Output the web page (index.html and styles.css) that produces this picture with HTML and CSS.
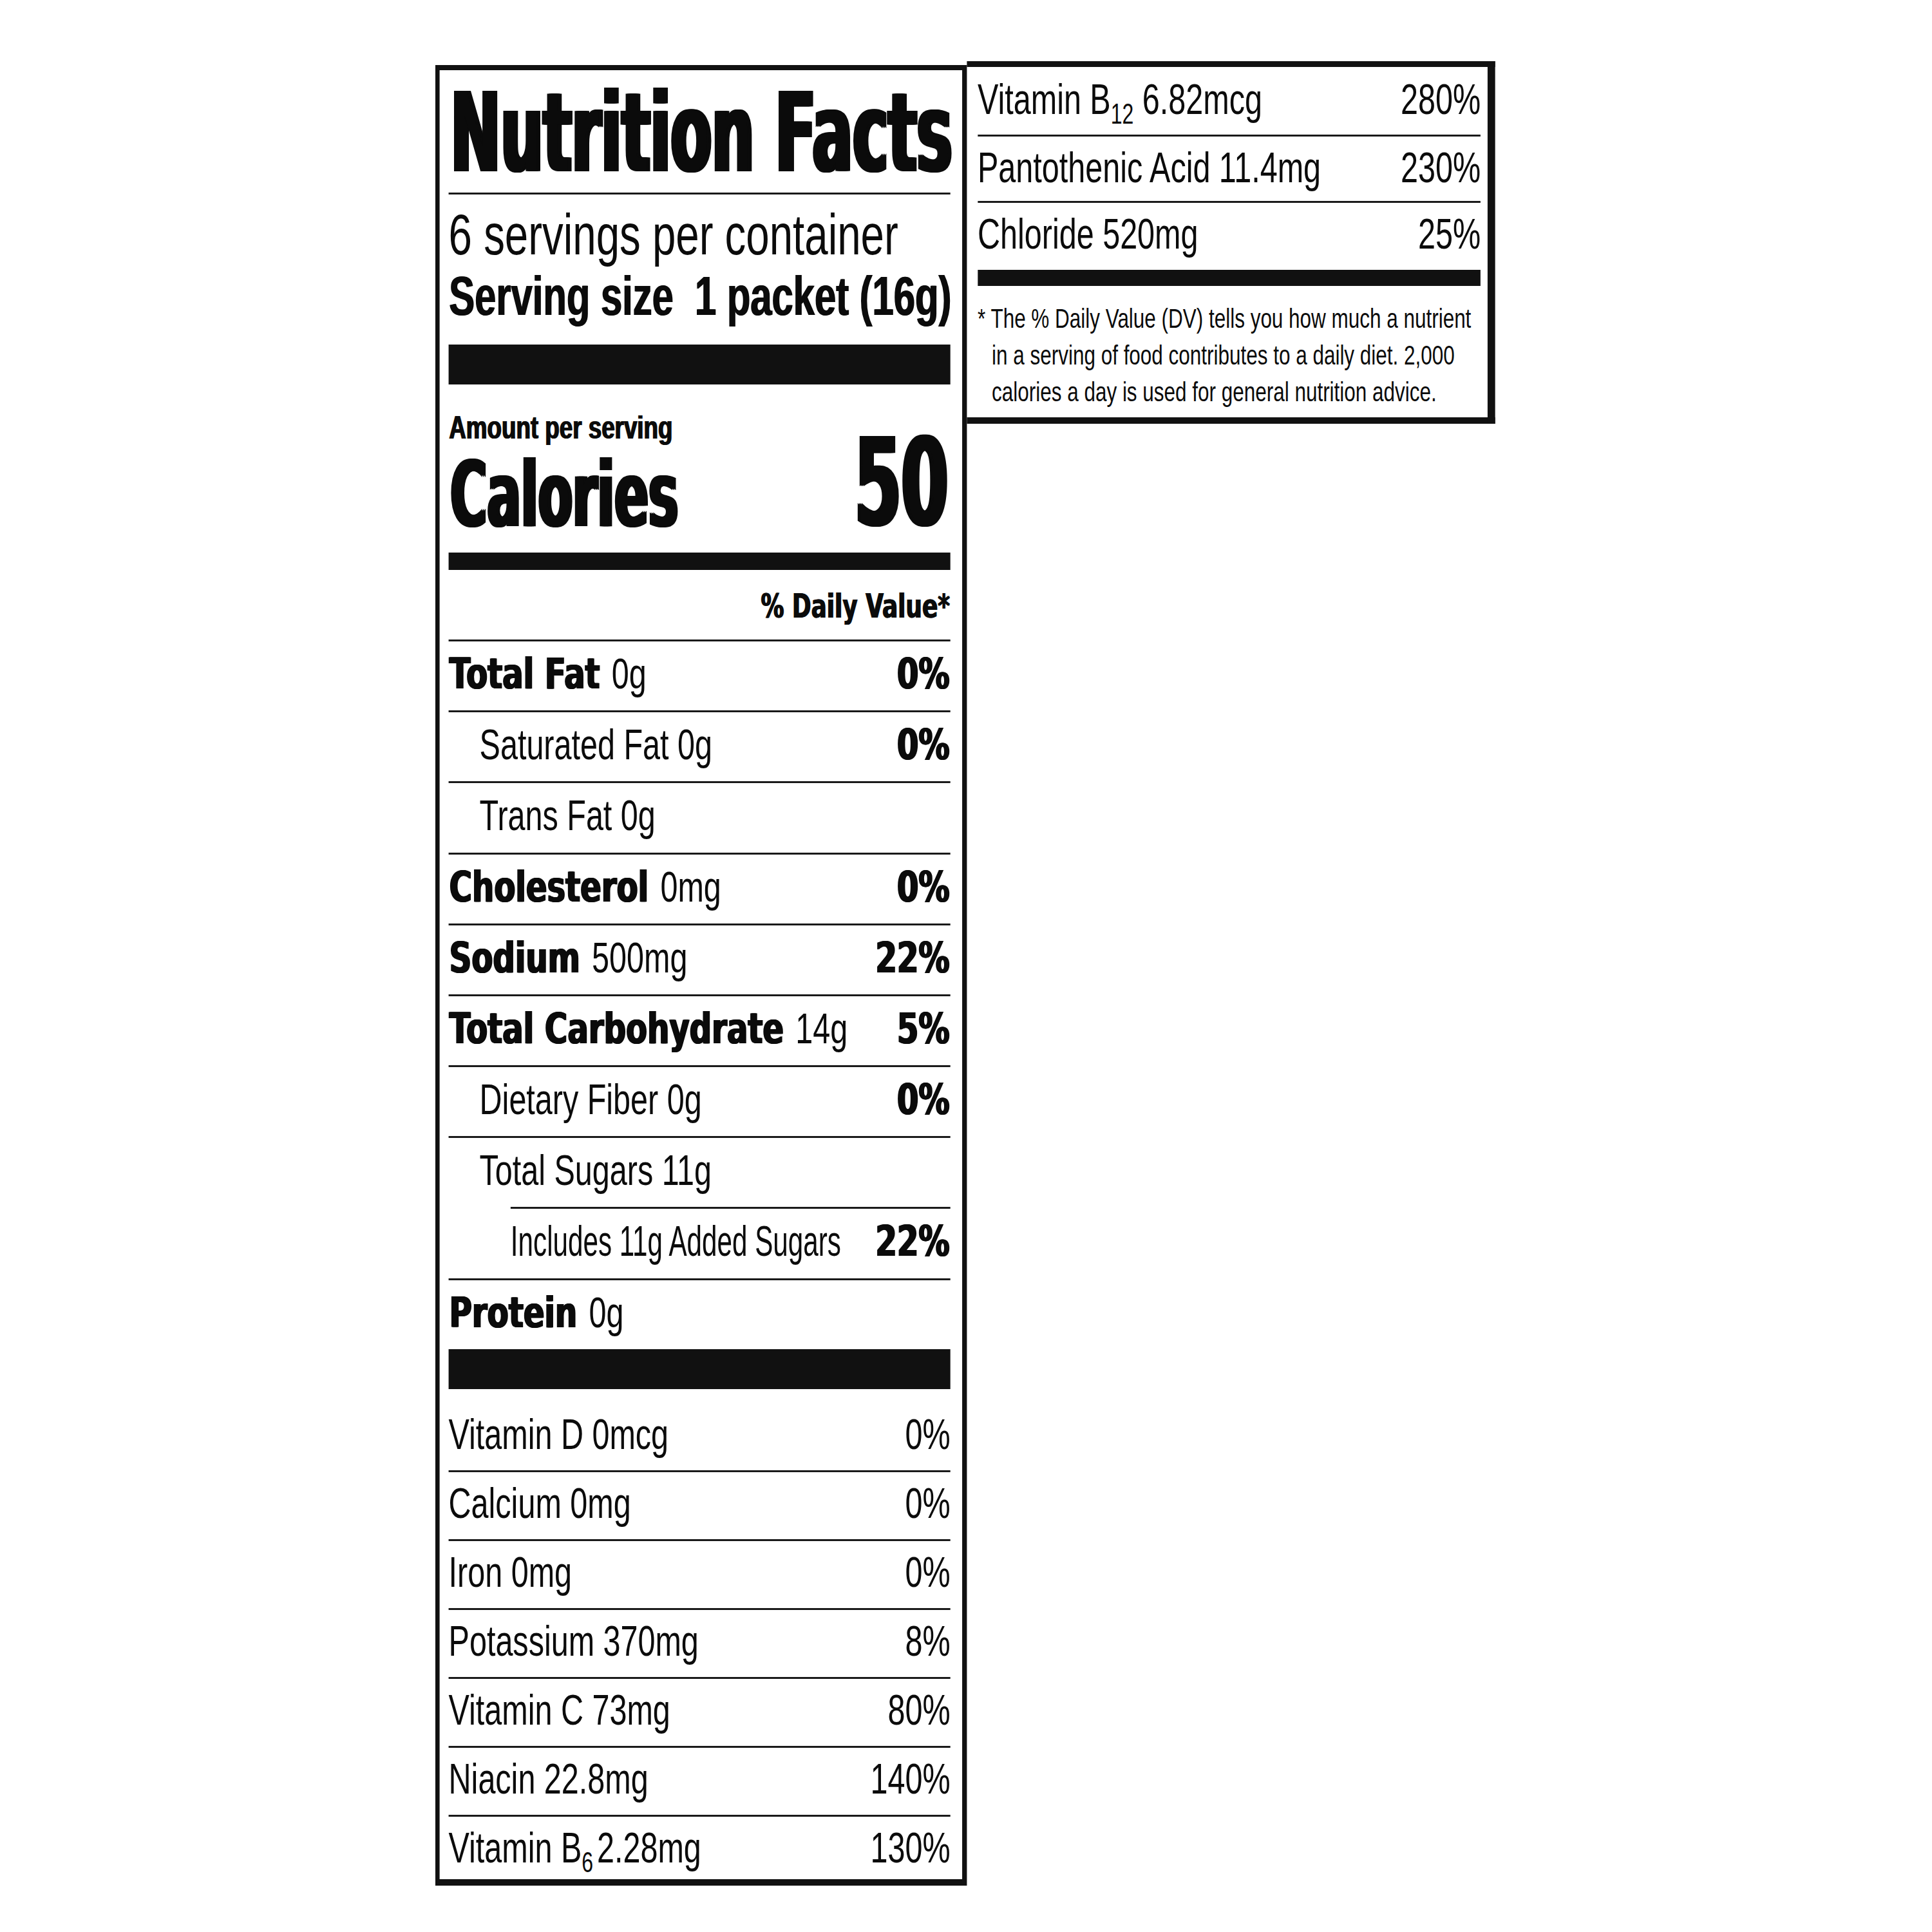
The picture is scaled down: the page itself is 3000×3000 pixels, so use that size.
FILE: index.html
```html
<!DOCTYPE html>
<html lang="en">
<head>
<meta charset="utf-8">
<title>Nutrition Facts</title>
<link rel="stylesheet" href="styles.css">
</head>
<body>
<div class="sheet">
  <section class="panel main">
    <h1 class="title">Nutrition Facts</h1>
    <div class="servings">
      <div class="per">6 servings per container</div>
      <div class="size">Serving size&nbsp; 1 packet (16g)</div>
    </div>
    <div class="bar bar-thick"></div>
    <div class="cal">
      <div class="cal-left">
        <div class="amount">Amount per serving</div>
        <div class="cal-label">Calories</div>
      </div>
      <div class="cal-value">50</div>
    </div>
    <div class="bar bar-mid"></div>
    <div class="dv-head"><span class="dv-text">% Daily Value*</span></div>
    <div class="nutrients">
      <div class="row"><span class="lbl"><b>Total Fat</b> 0g</span><b class="pct">0%</b></div>
      <div class="row sub"><span class="lbl">Saturated Fat 0g</span><b class="pct">0%</b></div>
      <div class="row sub"><span class="lbl">Trans Fat 0g</span></div>
      <div class="row"><span class="lbl"><b>Cholesterol</b> 0mg</span><b class="pct">0%</b></div>
      <div class="row"><span class="lbl"><b>Sodium</b> 500mg</span><b class="pct">22%</b></div>
      <div class="row"><span class="lbl"><b>Total Carbohydrate</b> 14g</span><b class="pct">5%</b></div>
      <div class="row sub"><span class="lbl">Dietary Fiber 0g</span><b class="pct">0%</b></div>
      <div class="row sub"><span class="lbl">Total Sugars 11g</span></div>
      <div class="row added"><span class="lbl">Includes 11g Added Sugars</span><b class="pct">22%</b></div>
      <div class="row"><span class="lbl"><b>Protein</b> 0g</span></div>
    </div>
    <div class="bar bar-thick"></div>
    <div class="vitamins">
      <div class="vrow"><span class="lbl">Vitamin D 0mcg</span><span class="val">0%</span></div>
      <div class="vrow"><span class="lbl">Calcium 0mg</span><span class="val">0%</span></div>
      <div class="vrow"><span class="lbl">Iron 0mg</span><span class="val">0%</span></div>
      <div class="vrow"><span class="lbl">Potassium 370mg</span><span class="val">8%</span></div>
      <div class="vrow"><span class="lbl">Vitamin C 73mg</span><span class="val">80%</span></div>
      <div class="vrow"><span class="lbl">Niacin 22.8mg</span><span class="val">140%</span></div>
      <div class="vrow"><span class="lbl">Vitamin B<span class="subs tight">6</span>2.28mg</span><span class="val">130%</span></div>
    </div>
  </section>
  <section class="panel side">
    <div class="srow"><span class="lbl">Vitamin B<span class="subs">12</span> 6.82mcg</span><span class="val">280%</span></div>
    <div class="srow"><span class="lbl">Pantothenic Acid 11.4mg</span><span class="val">230%</span></div>
    <div class="srow"><span class="lbl">Chloride 520mg</span><span class="val">25%</span></div>
    <div class="bar bar-side"></div>
    <p class="note">* The % Daily Value (DV) tells you how much a nutrient<br>in a serving of food contributes to a daily diet. 2,000<br>calories a day is used for general nutrition advice.</p>
  </section>
</div>
</body>
</html>
```
FILE: styles.css
```css
html, body {
  margin: 0;
  padding: 0;
  background: #fff;
}
body {
  box-sizing: border-box;
  width: 3000px;
  height: 3000px;
  overflow: hidden;
  padding-top: 95px;
  color: #0b0b0b;
  font-family: "Liberation Sans", Arial, Helvetica, sans-serif;
}

/* whole label is set in Helvetica-condensed proportions */
.sheet {
  display: flex;
  align-items: flex-start;
  width: max-content;
  margin-left: 676px;
  transform: scaleX(0.735);
  transform-origin: 0 0;
}

.panel {
  border: 0 solid #111;
}
.main {
  margin-top: 6px;
  border-width: 8px 10px 10px 9.5px;
  padding: 0 24.5px 0 19px;
  width: 1060px;
}
.side {
  border-width: 9px 16.3px 10px 0;
  padding: 0 15px 0 23.1px;
  width: 1062.6px;
}

.title {
  margin: 0;
  padding-top: 6px;
  height: 184px;
  line-height: 184px;
  font-family: "DejaVu Sans", sans-serif;
  font-weight: bold;
  font-size: 171.5px;
  white-space: nowrap;
  transform: scaleX(0.736);
  transform-origin: left center;
  text-shadow: 4px 0 0, 8px 0 0, 12px 0 0;
}

.servings {
  border-top: 3px solid #1a1a1a;
  padding: 14px 0 27px;
  white-space: nowrap;
}
.per {
  height: 96px;
  font-size: 89px;
  line-height: 96px;
}
.size {
  height: 96px;
  font-weight: bold;
  font-size: 85px;
  line-height: 96px;
  transform: scaleX(0.956);
  transform-origin: left center;
  text-shadow: 2px 0 0;
}

.bar { background: #111; }
.bar-thick { height: 62px; }
.bar-mid { height: 27px; }
.bar-side { height: 25px; }

.cal {
  display: flex;
  justify-content: space-between;
  align-items: flex-end;
  padding: 36.6px 0 16.4px;
  white-space: nowrap;
}
.amount {
  height: 60px;
  font-weight: bold;
  font-size: 50px;
  line-height: 60px;
  text-shadow: 2px 0 0;
}
.cal-label {
  height: 148px;
  font-family: "DejaVu Sans", sans-serif;
  font-weight: bold;
  font-size: 141px;
  line-height: 148px;
  transform: scaleX(0.751);
  transform-origin: left center;
  text-shadow: 5px 0 0, 10px 0 0;
}
.cal-value {
  height: 181.2px;
  font-family: "DejaVu Sans", sans-serif;
  font-weight: bold;
  font-size: 189px;
  line-height: 181.2px;
  transform: scaleX(0.752);
  transform-origin: right center;
  text-shadow: -4px 0 0, -8px 0 0, -12px 0 0;
}

.dv-head {
  padding-top: 5px;
  height: 103px;
  line-height: 103px;
  text-align: right;
  font-family: "DejaVu Sans", sans-serif;
  font-weight: bold;
  font-size: 51px;
  white-space: nowrap;
  transform: scaleX(0.956);
  transform-origin: right center;
  text-shadow: -2px 0 0;
}

.row,
.vrow,
.srow {
  display: flex;
  justify-content: space-between;
  align-items: baseline;
  white-space: nowrap;
}
.lbl {
  flex: 1 1 auto;
  min-width: 0;
}
.pct,
.val {
  flex: none;
}

.row {
  height: 101.2px;
  border-top: 3px solid #1a1a1a;
  font-size: 66px;
  line-height: 101.2px;
  padding-bottom: 6px;
}
.row b {
  font-family: "DejaVu Sans", sans-serif;
  font-weight: bold;
  font-size: 65.5px;
  text-shadow: 1.5px 0 0, 3px 0 0;
}
.lbl b {
  margin-right: 8px;
}
.row .pct {
  text-shadow: -1.5px 0 0, -3px 0 0;
}
.sub .lbl {
  padding-left: 65.3px;
}
.added {
  margin-left: 130.6px;
}
.added .lbl {
  transform: scaleX(0.87);
  transform-origin: left center;
}

.vrow {
  height: 96px;
  border-top: 3px solid #1a1a1a;
  font-size: 66px;
  line-height: 96px;
  padding-bottom: 8px;
}
.vrow:first-child {
  border-top: 0;
  padding-top: 22px;
}
.vrow:last-child {
  padding-bottom: 1px;
}

.srow {
  height: 96px;
  border-bottom: 3px solid #1a1a1a;
  font-size: 66px;
  line-height: 96px;
}
.srow:nth-child(1) { padding: 2px 0 7px; }
.srow:nth-child(2) { padding-bottom: 4px; }
.srow:nth-child(3) { padding-bottom: 8px; border-bottom: 0; }

.subs {
  font-size: 0.66em;
  line-height: 0;
  vertical-align: -15px;
}
.tight {
  margin-right: 8px;
}

.note {
  margin: 0;
  padding: 22px 0 10.5px 30px;
  text-indent: -30px;
  font-size: 42.8px;
  line-height: 57px;
  white-space: nowrap;
}
```
